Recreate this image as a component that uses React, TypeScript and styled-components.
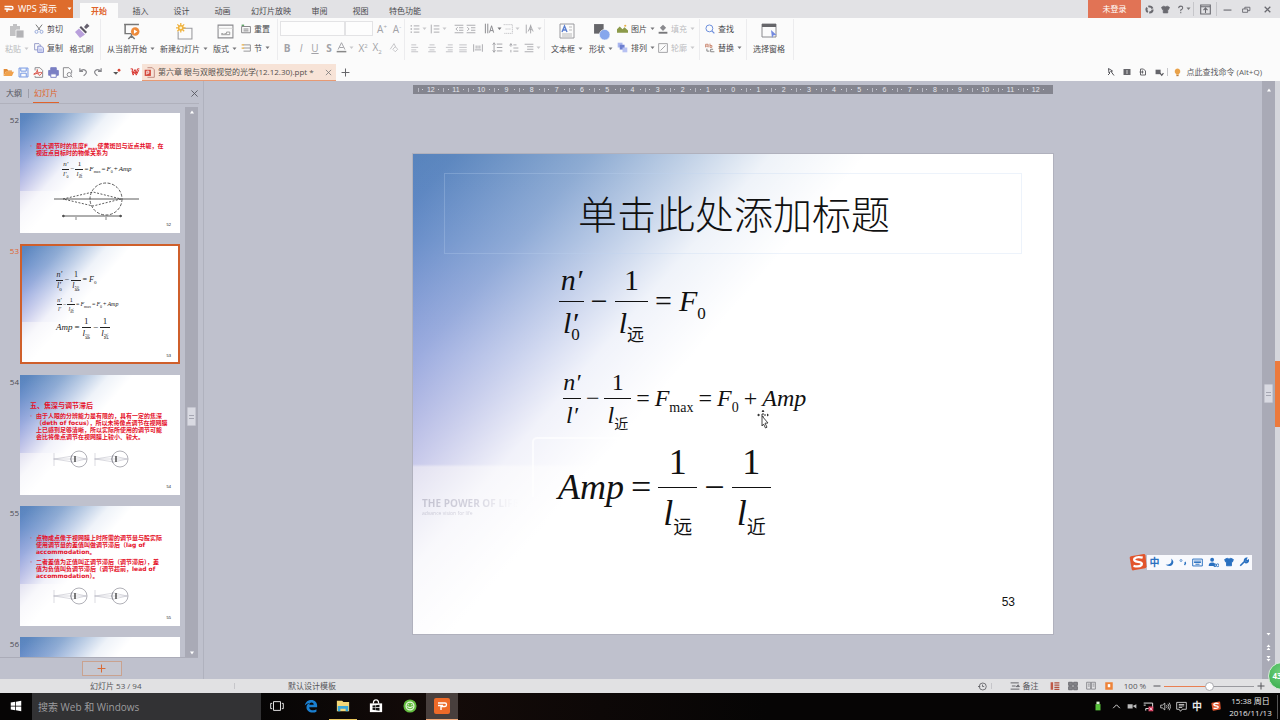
import React from "react";
import styled, { createGlobalStyle, css } from "styled-components";

const ORANGE = "#e0632b";
const UI = `"Open Sans", "Noto Sans CJK SC", sans-serif`;
const SERIF = `"Liberation Serif", "Noto Sans CJK SC", serif`;

const Global = createGlobalStyle`
  *, *::before, *::after { box-sizing: border-box; }
  body { margin: 0; background: #bfc1cd; }
  button { border: 0; padding: 0; background: none; font: inherit; color: inherit; }
`;

const Shell = styled.div`
  position: relative;
  display: flex;
  flex-direction: column;
  height: 100vh;
  overflow: hidden;
  font: 8px/12px ${UI};
  color: #4a4a4e;
`;

/* ---------- icons ---------- */

type IconProps = { w?: number; h?: number; box?: string; children: React.ReactNode };
const Drawing = styled.svg`
  display: block;
  flex: none;
  fill: none;
  stroke: currentColor;
  stroke-width: 1.4;
`;
const Icon = ({ w = 10, h = w, box = "0 0 16 16", children }: IconProps) => (
  <Drawing width={w} height={h} viewBox={box} aria-hidden="true">{children}</Drawing>
);
const Caret = ({ light = false }: { light?: boolean }) => (
  <Icon w={5} h={4} box="0 0 10 8"><path d="M1 1h8l-4 5z" fill={light ? "#c9c9cc" : "#77777b"} stroke="none" /></Icon>
);

/* ---------- title bar ---------- */

const TitleBar = styled.header`
  display: flex;
  align-items: stretch;
  flex: none;
  height: 18px;
  background: #e2e2e5;
`;
const Brand = styled.button`
  display: flex;
  align-items: center;
  gap: 4px;
  width: 73px;
  padding-left: 4px;
  margin-right: 7px;
  background: #de6c2c;
  color: #fff;
  font-size: 9px;
  white-space: nowrap;
  svg:last-child { margin-left: 6px; }
`;
const Tabs = styled.nav`
  display: flex;
  align-items: flex-end;
  flex: 1;
`;
const Tab = styled.button<{ $on?: boolean }>`
  height: 15px;
  min-width: ${p => (p.$on ? 38 : 41)}px;
  padding: 0 8px;
  white-space: nowrap;
  ${p => p.$on && css`background: #fbfbfb; color: ${ORANGE}; font-weight: 700; margin-right: 2px;`}
`;
const WindowTools = styled.div`
  display: flex;
  align-items: center;
  color: #6a6a70;
`;
const Login = styled.button`
  width: 53px;
  height: 18px;
  background: #e17355;
  color: #fff;
`;
const Tool = styled.button<{ $w: number }>`
  display: flex;
  align-items: center;
  justify-content: center;
  gap: 1px;
  width: ${p => p.$w}px;
  height: 16px;
`;
const Rule = styled.i<{ $h?: number }>`
  flex: none;
  width: 1px;
  height: ${p => p.$h ?? 12}px;
  background: #c6c6ca;
`;

/* ---------- ribbon ---------- */

const Ribbon = styled.section`
  display: flex;
  flex: none;
  height: 45px;
  padding-top: 1px;
  background: #fbfbfb;
  overflow: hidden;
`;
const Group = styled.div<{ $l?: number; $r?: number }>`
  display: flex;
  flex: none;
  height: 41px;
  padding: 0 ${p => p.$r ?? 2}px 0 ${p => p.$l ?? 2}px;
  border-right: 1px solid #ececee;
`;
const Big = styled.button<{ $w: number; $off?: boolean }>`
  display: grid;
  grid-template-rows: 22px 14px;
  justify-items: center;
  align-items: center;
  align-content: start;
  padding-top: 1px;
  width: ${p => p.$w}px;
  color: ${p => (p.$off ? "#b9b9bc" : "#4a4a4e")};
`;
const Label = styled.span`
  display: flex;
  align-items: center;
  gap: 3px;
  white-space: nowrap;
`;
const Stack = styled.div<{ $w: number }>`
  display: flex;
  flex-direction: column;
  width: ${p => p.$w}px;
`;
const Small = styled.button<{ $off?: boolean }>`
  display: flex;
  align-items: center;
  gap: 3px;
  height: 19px;
  white-space: nowrap;
  color: ${p => (p.$off ? "#bcbcc0" : "#4a4a4e")};
`;
const Row = styled.div`
  display: flex;
  align-items: center;
  height: 19px;
  color: #a2a2a7;
`;
const Mini = styled.button<{ $w: number; $center?: boolean }>`
  display: flex;
  flex: none;
  align-items: center;
  justify-content: ${p => (p.$center ? "center" : "flex-start")};
  gap: 2px;
  width: ${p => p.$w}px;
  height: 16px;
`;
const Glyph = styled.span`
  font: 10px/14px ${UI};
  b { font-weight: 700; }
  sup, sub { font-size: 6px; line-height: 1; }
`;
const Picker = styled.select<{ $w: number }>`
  width: ${p => p.$w}px;
  height: 15px;
  border: 1px solid #e3e3e5;
  background: #fdfdfd;
  appearance: none;
  font-size: 8px;
`;

/* ---------- quick access row ---------- */

const Quick = styled.div`
  display: flex;
  align-items: center;
  flex: none;
  height: 18px;
  padding-left: 1px;
  background: #fbfbfb;
  color: #88888d;
`;
const DocTab = styled.div`
  display: flex;
  align-items: center;
  height: 17px;
  width: 194px;
  align-self: flex-end;
  padding: 0 4px 0 2px;
  gap: 3px;
  background: #f7e3d7;
  border-bottom: 1px solid #e79a74;
  color: #55504e;
  white-space: nowrap;
  button { margin-left: auto; }
`;
const QuickRight = styled.div`
  display: flex;
  align-items: center;
  margin-left: auto;
  padding-right: 18px;
  white-space: nowrap;
`;
const Hint = styled.button`
  display: flex;
  align-items: center;
  gap: 4px;
  padding-left: 5px;
  color: #5c5c60;
`;

/* ---------- workspace ---------- */

const Workspace = styled.main`
  display: flex;
  flex: 1;
  min-height: 0;
`;
const Side = styled.aside`
  display: flex;
  flex-direction: column;
  flex: none;
  width: 204px;
  border-right: 1px solid #b0b2be;
`;
const SideHead = styled.div`
  display: flex;
  align-items: stretch;
  flex: none;
  height: 23px;
  margin-right: 4px;
  padding: 3px 0 0 5px;
  border-bottom: 1px solid #b0b1bc;
  > :last-child { margin-left: auto; width: 9px; }
`;
const SideTab = styled.button<{ $on?: boolean }>`
  padding: 0 1px;
  color: ${p => (p.$on ? ORANGE : "#55565e")};
  border-bottom: 1px solid ${p => (p.$on ? ORANGE : "transparent")};
`;
const HeadRule = styled.i`
  width: 1px;
  height: 9px;
  margin: 5px 4px 0 5px;
  background: #9d9eaa;
`;
const SideBody = styled.div`
  display: flex;
  flex: 1;
  min-height: 0;
  margin-right: 5px;
  border-bottom: 1px solid #abacb8;
`;
const ThumbList = styled.ol`
  display: flex;
  flex-direction: column;
  gap: 11px;
  flex: 1;
  margin: 0;
  padding: 9px 0 0;
  overflow: hidden;
  list-style: none;
`;
const ThumbItem = styled.li<{ $on?: boolean }>`
  display: flex;
  flex: none;
  color: ${p => (p.$on ? ORANGE : "#4c4d55")};
`;
const ThumbNo = styled.span`
  width: 20px;
  padding: 1px 1px 0 0;
  text-align: right;
`;
const Track = styled.div<{ $top: number }>`
  display: flex;
  flex-direction: column;
  align-items: center;
  flex: none;
  width: 13px;
  margin-top: ${p => p.$top}px;
  padding: 3px 0 2px;
  background: #a9aab6;
`;
const Knob = styled.i`
  flex: none;
  width: 9px;
  height: 19px;
  background: #d9dae2;
  border: 1px solid #c4c5cf;
  border-radius: 1px;
  display: flex;
  flex-direction: column;
  justify-content: center;
  gap: 2px;
  padding: 0 1px;
  &::before, &::after { content: ""; height: 1px; background: #a5a6b2; }
`;
const Space = styled.i<{ $n: number }>`
  flex: ${p => p.$n} 1 0;
`;
const AddBar = styled.div`
  display: flex;
  justify-content: center;
  align-items: center;
  flex: none;
  height: 21px;
`;
const AddButton = styled.button`
  display: flex;
  align-items: center;
  justify-content: center;
  width: 40px;
  height: 15px;
  border: 1px solid #c9a28f;
  background: #c6c7d0;
  color: #d96a35;
`;

/* ---------- slides ---------- */

const slidePaint = css`
  background:
    linear-gradient(131deg, rgba(255,255,255,0) 0%, rgba(255,255,255,.03) 4%, rgba(255,255,255,.32) 17%,
      rgba(255,255,255,.62) 26%, rgba(255,255,255,.9) 34%, #fff 43%),
    linear-gradient(#5884bd 0%, #5a83c4 18%, #6d84d0 42%, #7478cb 64.6%, #b5b2da 65.2%, #c8c6e4 100%);
`;
const Thumb = styled.div<{ $on?: boolean }>`
  display: flex;
  flex-direction: column;
  flex: none;
  width: 160px;
  height: 120px;
  overflow: hidden;
  ${slidePaint}
  outline: ${p => (p.$on ? "2px solid #cf5f2b" : "0")};
  outline-offset: -2px;
  color: #222;
`;
const redType = css`
  margin: 0 0 1px;
  padding-left: 10px;
  font-family: "DejaVu Sans", "Noto Sans CJK SC", sans-serif;
  font-weight: 700;
  color: #e5122b;
  white-space: nowrap;
`;
const RedTitle = styled.h2`
  ${redType}
  font-size: 7px;
  line-height: 9px;
`;
const RedText = styled.p`
  ${redType}
  display: grid;
  grid-template-columns: 6px 1fr;
  font-size: 6px;
  line-height: 7px;
  &::before { content: "·"; color: #c46a86; }
  span { grid-column: 2; }
  sub { font-size: 4px; line-height: 0; }
`;
const Pad = styled.div<{ $h: number }>`
  flex: none;
  height: ${p => p.$h}px;
`;
const PageNo = styled.span<{ $big?: boolean }>`
  margin-top: auto;
  align-self: flex-end;
  padding: ${p => (p.$big ? "0 38px 24px 0" : "0 9px 5px 0")};
  font: ${p => (p.$big ? "12px/16px" : "4px/6px")} "Liberation Sans", sans-serif;
  color: #111;
`;

const Canvas = styled.section`
  display: flex;
  flex-direction: column;
  align-items: center;
  flex: 1;
  min-width: 0;
  padding-top: 4px;
  overflow: hidden;
`;
const Ruler = styled.div`
  display: flex;
  flex: none;
  width: 640px;
  height: 9px;
  padding: 0 5px;
  background: #84858f;
  color: #e6e7ee;
  font: 7px/9px "Liberation Sans", sans-serif;
`;
const RulerCell = styled.span`
  display: flex;
  flex: 1 1 0;
  align-items: center;
  justify-content: space-between;
  &::before { content: ""; width: 1px; height: 4px; background: #b9bac4; }
  &::after { content: ""; width: 1px; height: 1px; margin-right: 4px; background: #d0d1da; }
  b { font-weight: 400; width: 8px; text-align: center; }
`;
const RulerDot = styled.i`
  width: 1px;
  height: 1px;
  background: #d0d1da;
`;
const Slide = styled.article`
  position: relative;
  display: flex;
  flex-direction: column;
  flex: none;
  width: 640px;
  height: 480px;
  margin-top: 60px;
  padding-top: 19px;
  overflow: hidden;
  ${slidePaint}
  box-shadow: 0 0 0 1px rgba(150,150,160,.35);
  color: #111;
`;
const TitleHolder = styled.h1`
  flex: none;
  height: 81px;
  margin: 0 31px;
  padding-left: 2px;
  border: 1px solid rgba(190,212,240,.28);
  font: 300 39px/76px "Noto Sans CJK SC", sans-serif;
  text-align: center;
`;
const Watermark = styled.div`
  position: absolute;
  left: 9px;
  top: 342px;
  font: 700 10px/14px "Open Sans", sans-serif;
  background: linear-gradient(90deg, #c3c2d0, #d4d3de 55%, rgba(240,240,244,.1) 95%);
  background-clip: text;
  color: transparent;
  small { display: block; font-size: 5px; line-height: 6px; font-weight: 400; }
`;
const Glow = styled.i`
  position: absolute;
  left: 119px;
  top: 283px;
  width: 120px;
  height: 60px;
  border: solid rgba(255,255,255,.65);
  border-width: 2px 0 0 2px;
  border-radius: 5px 0 0 0;
`;
const Pointer = styled.div`
  position: absolute;
  left: 343px;
  top: 255px;
  color: #333;
`;

/* ---------- formulas ---------- */

type Scale = { size: number; sub: number; gap: number; pad: number; h: number; x: number };
const Formula = styled.div<{ $s: Scale }>`
  display: flex;
  flex: none;
  align-items: center;
  gap: ${p => p.$s.gap}px;
  height: ${p => p.$s.h}px;
  padding-left: ${p => p.$s.x}px;
  font: ${p => p.$s.size}px/${p => p.$s.size}px ${SERIF};
  white-space: nowrap;
  sub {
    font-size: ${p => p.$s.sub}px;
    line-height: 0;
    font-style: normal;
    vertical-align: -${p => Math.round(p.$s.size / 4)}px;
  }
`;
const Frac = styled.span<{ $s: Scale }>`
  display: grid;
  grid-template-rows: 1fr 1px 1fr;
  align-self: stretch;
  justify-items: center;
  &::before {
    content: "";
    grid-row: 2;
    width: 100%;
    background: currentColor;
  }
  > :first-child { grid-row: 1; align-self: end; padding-bottom: ${p => p.$s.pad}px; }
  > :last-child { grid-row: 3; align-self: start; padding: ${p => p.$s.pad}px ${p => Math.round(p.$s.size / 8)}px 0; }
`;
const Var = styled.i`
  font-style: italic;
`;
/* prime and index set one above the other */
const Scripts = styled.span<{ $s: Scale }>`
  display: inline-grid;
  height: ${p => p.$s.size}px;
  vertical-align: top;
  > * { grid-area: 1 / 1; }
  > :last-child {
    font-style: normal;
    font-size: ${p => p.$s.sub}px;
    padding-top: ${p => Math.round(p.$s.size / 2) - 3 * Math.round(p.$s.size / 30)}px;
  }
`;

const FormulaFar = ({ s }: { s: Scale }) => (
  <Formula $s={s}>
    <Frac $s={s}>
      <Var>n′</Var>
      <Var>l<Scripts $s={s}><span>′</span><span>0</span></Scripts></Var>
    </Frac>
    <span>−</span>
    <Frac $s={s}><span>1</span><Var>l<sub>远</sub></Var></Frac>
    <span>=</span>
    <Var>F<sub>0</sub></Var>
  </Formula>
);
const FormulaMax = ({ s, zero = false }: { s: Scale; zero?: boolean }) => (
  <Formula $s={s}>
    <Frac $s={s}>
      <Var>n′</Var>
      <Var>l′{zero && <sub>0</sub>}</Var>
    </Frac>
    <span>−</span>
    <Frac $s={s}><span>1</span><Var>l<sub>近</sub></Var></Frac>
    <span>=</span>
    <Var>F<sub>max</sub></Var>
    <span>=</span>
    <Var>F<sub>0</sub></Var>
    <span>+</span>
    <Var>Amp</Var>
  </Formula>
);
const FormulaAmp = ({ s }: { s: Scale }) => (
  <Formula $s={s}>
    <Var>Amp</Var>
    <span>=</span>
    <Frac $s={s}><span>1</span><Var>l<sub>远</sub></Var></Frac>
    <span>−</span>
    <Frac $s={s}><span>1</span><Var>l<sub>近</sub></Var></Frac>
  </Formula>
);

const EyePair = () => (
  <Icon w={160} h={24} box="0 0 160 24">
    {[34, 75].map(x => (
      <g key={x} stroke="#8e8e98" strokeWidth=".7">
        <path d={`M${x} 6v13M${x - 1} 12h34M${x} 12l19-3 13 3-13 3z`} stroke="#b5b5c0" strokeWidth=".5" />
        <circle cx={x + 25} cy="12" r="8" />
        <path d={`M${x + 18} 8q-3 4 0 8`} />
        <path d={`M${x + 21} 9v6`} stroke="#444" strokeWidth="1.4" />
      </g>
    ))}
  </Icon>
);

/* ---------- floating input bar ---------- */

const Ime = styled.div`
  position: absolute;
  right: 28px;
  bottom: 149px;
  display: flex;
  align-items: center;
`;
const ImeKeys = styled.div`
  display: flex;
  align-items: center;
  justify-content: space-around;
  width: 105px;
  height: 15px;
  background: #f8f9fd;
  color: #2a70c0;
  font-size: 10px;
  font-weight: 700;
`;
const SogouMark = ({ w }: { w: number }) => (
  <Icon w={w} box="0 0 20 20">
    <path d="M2 3.5 16.500 1Q18 1 18.300 2.500L19.500 15Q19.500 16.500 18 17L5 19.300Q3.500 19.500 3 18L.8 5.500Q.6 4 2 3.500z" fill="#e2552c" stroke="none" />
    <path d="M15.200 5.200Q9 3.500 6 6.200Q4.500 9 10 9.800Q15.500 10.500 14 13.200Q11.500 16 5 14.300" stroke="#fff" strokeWidth="2.600" />
  </Icon>
);
const Edge = styled.i`
  flex: none;
  width: 5px;
  background: linear-gradient(#d5d6dc 0 280px, #ec7a3c 280px 346px, #d5d6dc 346px);
`;
const Ball = styled.button`
  position: absolute;
  right: -16px;
  bottom: 30px;
  width: 28px;
  height: 28px;
  padding-right: 10px;
  border: 1px solid #d5ecd6;
  border-radius: 50%;
  background: radial-gradient(circle at 45% 35%, #6fd07a, #2fa646);
  color: #fff;
  font-weight: 700;
`;

/* ---------- status bar and taskbar ---------- */

const Status = styled.footer`
  display: flex;
  align-items: center;
  flex: none;
  height: 14px;
  background: #e1e1e3;
  white-space: nowrap;
  color: #55555a;
`;
const StatusText = styled.span<{ $l: number; $w: number }>`
  width: ${p => p.$w}px;
  padding-left: ${p => p.$l}px;
`;
const StatusRight = styled.div`
  display: flex;
  align-items: center;
  margin-left: auto;
  padding-right: 14px;
`;
const NotesTool = styled(Tool)`
  gap: 3px;
  margin-left: 10px;
`;
const Zoom = styled.input`
  width: 90px;
  height: 10px;
  margin: 0 2px 0 3px;
  appearance: none;
  background: linear-gradient(90deg, #e98053 50%, #9a9a9f 50%) center / 100% 1px no-repeat;
  &::-webkit-slider-thumb {
    appearance: none;
    width: 9px;
    height: 9px;
    border: 1px solid #a9a9ae;
    border-radius: 50%;
    background: #fff;
  }
`;
const Taskbar = styled.footer`
  display: flex;
  align-items: stretch;
  flex: none;
  height: 27px;
  background: linear-gradient(90deg, #060505 20%, #140b09 34%, #060505 60%);
  color: #e8e8e8;
`;
const TaskItem = styled.button<{ $w: number; $line?: string; $on?: boolean }>`
  display: flex;
  align-items: center;
  justify-content: center;
  width: ${p => p.$w}px;
  border-bottom: 1px solid ${p => p.$line ?? "transparent"};
  background: ${p => (p.$on ? "#483f3d" : "none")};
`;
const Search = styled.input`
  width: 229px;
  padding: 0 6px;
  border: 0;
  background: #323234;
  color: #ddd;
  font: 10px/14px ${UI};
  &::placeholder { color: #9c9c9e; opacity: 1; }
`;
const Tray = styled.div`
  display: flex;
  align-items: center;
  margin-left: auto;
  padding-right: 2px;
`;
const Clock = styled.time`
  width: 51px;
  padding-right: 3px;
  border-right: 1px solid #555;
  text-align: center;
  white-space: nowrap;
`;
const Lang = styled.span`
  font-size: 10px;
  font-weight: 700;
`;

const big = {
  far: { size: 30, sub: 17, gap: 7, pad: 6, h: 94, x: 146 },
  max: { size: 24, sub: 14, gap: 5, pad: 4, h: 80, x: 150 },
  amp: { size: 36, sub: 19, gap: 7, pad: 7, h: 98, x: 145 },
};
const tiny = {
  far: { size: 8, sub: 5, gap: 2, pad: 1, h: 24, x: 36 },
  max: { size: 6, sub: 4, gap: 1, pad: 1, h: 20, x: 37 },
  amp: { size: 9, sub: 5, gap: 2, pad: 1, h: 24, x: 36 },
  top: { size: 7, sub: 4, gap: 1, pad: 1, h: 24, x: 42 },
};
const marks = Array.from({ length: 25 }, (_, i) => Math.abs(i - 12));

export default function App() {
  return (
    <Shell>
      <Global />
      <TitleBar>
        <Brand>
          <Icon w={10} h={8} box="0 0 20 16"><path d="M1 3h14q3 0 3 3t-3 3H6v5M1 8h10" stroke="#fff" strokeWidth="2.6" /></Icon>
          WPS 演示
          <Icon w={5} h={4} box="0 0 10 8"><path d="M1 1h8l-4 5z" fill="#fff" stroke="none" /></Icon>
        </Brand>
        <Tabs>
          <Tab $on>开始</Tab>
          {["插入", "设计", "动画", "幻灯片放映", "审阅", "视图", "特色功能"].map(t => <Tab key={t}>{t}</Tab>)}
        </Tabs>
        <WindowTools>
          <Login>未登录</Login>
          <Tool $w={16} aria-label="同步"><Icon w={9}><circle cx="8" cy="8" r="5.500" strokeWidth="3.600" strokeDasharray="9 2.500" /></Icon></Tool>
          <Tool $w={16} aria-label="皮肤"><Icon w={9}><path d="M5 2 1 4l1.500 4L4 7.500V14h8V7.500l1.500.5L15 4l-4-2q-3 2.500-6 0z" fill="currentColor" /></Icon></Tool>
          <Tool $w={20} aria-label="帮助"><Icon w={9}><path d="M4.500 5.500Q5 2 8.500 2T12 5.500Q12 7 8.500 9v2M8.500 12.500v2" strokeWidth="1.800" /></Icon><Caret /></Tool>
          <Rule $h={14} />
          <Tool $w={22} aria-label="折叠功能区"><Icon w={11}><path d="M1 1.500h14v13H1zM1 4h14M8 13V6.500M5 9l3-3 3 3" strokeWidth="1.600" /></Icon></Tool>
          <Rule $h={14} />
          <Tool $w={20} aria-label="最小化"><Icon w={9}><path d="M1 9h14" strokeWidth="2" /></Icon></Tool>
          <Tool $w={18} aria-label="还原"><Icon w={9}><path d="M1 7h9v6H1zM5 7V4h9v6h-4" strokeWidth="1.600" /></Icon></Tool>
          <Tool $w={25} aria-label="关闭"><Icon w={9}><path d="m3 3 10 10M13 3 3 13" strokeWidth="2.200" /></Icon></Tool>
        </WindowTools>
      </TitleBar>

      <Ribbon>
        <Group $l={0} $r={3}>
          <Big $w={34} $off>
            <Icon w={16}><path d="M1 3h10v10H1zM4 1h4v3H4z" fill="#c2c2c4" stroke="none" /><path d="M7 7h8v8H7z" fill="#b3b3b6" stroke="#fbfbfb" strokeWidth=".8" /></Icon>
            <Label>粘贴 <Caret light /></Label>
          </Big>
          <Stack $w={32}>
            <Small><Icon><path d="m3 1 7 9M13 1 6 10" stroke="#666" /><circle cx="4" cy="12.500" r="2.400" stroke="#8ea2d8" /><circle cx="12" cy="12.500" r="2.400" stroke="#8ea2d8" /></Icon>剪切</Small>
            <Small><Icon><path d="M1 1h7l2 2v8H1z" stroke="#8d93c4" /><path d="M6 5h6l3 3v7H6z" fill="#e6e9fa" stroke="#7f88cc" /><path d="M8 10h5M8 12.500h5" stroke="#7f88cc" strokeWidth=".8" /></Icon>复制</Small>
          </Stack>
          <Big $w={31}>
            <Icon w={16}><path d="m10 4 3-3.500 2.500 2.500L12 6z" fill="#66606e" stroke="none" /><path d="m7 3 6 6-1.500 1.500-6-6z" fill="#5a5562" stroke="none" /><path d="m5 5.500 6 6-5 3.500L1 9z" fill="#b9a0dc" stroke="none" /></Icon>
            <Label>格式刷</Label>
          </Big>
        </Group>
        <Group $r={0}>
          <Big $w={56}>
            <Icon w={17}><path d="M1 1.500h14M2 2v8h6M8 10v4M5 15l3-3 3 3" stroke="#777" /><circle cx="11.500" cy="8" r="4" fill="#ee8a3a" stroke="none" /><path d="m10.300 6 3.200 2-3.200 2z" fill="#fff" stroke="none" /></Icon>
            <Label>从当前开始 <Caret /></Label>
          </Big>
          <Big $w={50}>
            <Icon w={17}><path d="M4 5h11v10H2V8" stroke="#9a9a9e" strokeWidth="1" /><path d="M4.500 0v9M0 4.500h9M1.300 1.300l6.400 6.400M7.700 1.300 1.300 7.700" stroke="#f0b23c" strokeWidth="1.200" /><circle cx="4.500" cy="4.500" r="2" fill="#fff3c9" stroke="#f0b23c" /></Icon>
            <Label>新建幻灯片 <Caret /></Label>
          </Big>
          <Big $w={32}>
            <Icon w={17}><path d="M1 2h14v12H1z" strokeWidth="1" stroke="#8a8a8e" /><path d="M1 5h14" stroke="#ccc" strokeWidth=".8" /><path d="M4 10h2M7 10h2v-1.500h3V11H4" strokeWidth=".9" stroke="#999" /></Icon>
            <Label>版式 <Caret /></Label>
          </Big>
          <Stack $w={36}>
            <Small><Icon><path d="M1 4h14v10H1zM4 8h8M4 11h8" stroke="#77777a" /><path d="M1 2h4" stroke="#4d9a56" strokeWidth="2" /></Icon>重置</Small>
            <Small><Icon><path d="M4 3h11M4 13h11M4 8h11v5M15 3v5" stroke="#8a8a8e" /><path d="M1 3h4M1 8h4" stroke="#e9b04a" strokeWidth="2" /></Icon>节 <Caret /></Small>
          </Stack>
        </Group>
        <Group $r={0}>
          <Stack $w={124}>
            <Row>
              <Picker $w={65} aria-label="字体"><option></option></Picker>
              <Picker $w={28} aria-label="字号"><option></option></Picker>
              <Mini $w={18} $center aria-label="增大字号"><Glyph>A<sup>+</sup></Glyph></Mini>
              <Mini $w={12} $center aria-label="减小字号"><Glyph>A<sup>-</sup></Glyph></Mini>
            </Row>
            <Row>
              <Mini $w={14} $center aria-label="加粗"><Glyph><b>B</b></Glyph></Mini>
              <Mini $w={14} $center aria-label="倾斜"><Glyph><i>I</i></Glyph></Mini>
              <Mini $w={14} $center aria-label="下划线"><Glyph><u>U</u></Glyph></Mini>
              <Mini $w={14} $center aria-label="阴影"><Glyph><b>S</b></Glyph></Mini>
              <Mini $w={20} aria-label="字体颜色"><Icon w={11}><path d="m3 11 5-10 5 10M5 8h6" /><path d="M1 14h14" stroke="#888" strokeWidth="2.200" /></Icon><Caret light /></Mini>
              <Mini $w={14} $center aria-label="上标"><Glyph>X<sup>2</sup></Glyph></Mini>
              <Mini $w={14} $center aria-label="下标"><Glyph>X<sub>2</sub></Glyph></Mini>
              <Mini $w={20} $center aria-label="清除格式"><Icon><path d="m2 10 6-9 3 6M6 10l4-4 4 4-4 4z" stroke="#c0c0c4" /></Icon></Mini>
            </Row>
          </Stack>
        </Group>
        <Group $l={5} $r={0}>
          <Stack $w={134}>
            <Row>
              <Mini $w={20} aria-label="项目符号"><Icon><path d="M6 3h9M6 8h9M6 13h9" /><path d="M1 3h2M1 8h2M1 13h2" strokeWidth="2.200" /></Icon><Caret light /></Mini>
              <Mini $w={24} aria-label="编号"><Icon><path d="M6 3h9M6 8h9M6 13h9M2 1v14" /></Icon><Caret light /></Mini>
              <Mini $w={12} aria-label="减少缩进"><Icon><path d="M1 2h14M8 6h7M8 10h7M1 14h14M6 5 3 8l3 3" /></Icon></Mini>
              <Mini $w={18} aria-label="增加缩进"><Icon><path d="M1 2h14M8 6h7M8 10h7M1 14h14M2 5l3 3-3 3" /></Icon></Mini>
              <Mini $w={19} aria-label="文字方向"><Icon w={11}><path d="M2 1v14M5.500 1v14M8 14l3-10 3 10M9 11h4" stroke="#88888d" /></Icon><Caret /></Mini>
              <Mini $w={22} aria-label="对齐文本"><Icon><path d="M1 1h14v14H1M4 8h8" stroke="#c0c0c4" strokeDasharray="2 1" /></Icon><Caret light /></Mini>
              <Mini $w={18} aria-label="转换图形"><Icon><path d="M2 1v14M5 12l4-9 4 9M9 1v14M7 9h4" /></Icon><Caret light /></Mini>
            </Row>
            <Row>
              <Mini $w={17} aria-label="左对齐"><Icon><path d="M2 3h8M2 7h11M2 11h8M2 14h11" stroke="#bdbdc1" /></Icon></Mini>
              <Mini $w={17} aria-label="居中"><Icon><path d="M4 3h8M2 7h12M4 11h8M2 14h12" stroke="#bdbdc1" /></Icon></Mini>
              <Mini $w={14} aria-label="右对齐"><Icon><path d="M6 3h8M3 7h11M6 11h8M3 14h11" stroke="#bdbdc1" /></Icon></Mini>
              <Mini $w={15} aria-label="两端对齐"><Icon><path d="M2 3h12M2 7h12M2 11h12M2 14h12" stroke="#bdbdc1" /></Icon></Mini>
              <Mini $w={19} aria-label="分散对齐"><Icon><path d="M1 2v12M15 2v12M3 11h10M5 4v5M8 4v5M11 4v5" /></Icon></Mini>
              <Mini $w={17} aria-label="行距"><Icon w={11}><path d="M7 3h8M7 8h8M7 13h8M3 2v12M1 4l2-3 2 3M1 12l2 3 2-3" /></Icon></Mini>
              <Mini $w={15} aria-label="段距"><Icon w={10}><path d="M7 3h5M7 8h8M7 13h8M3 1v5M1 4l2-3 2 3M3 15v-4" /></Icon></Mini>
              <Mini $w={18} aria-label="制表位"><Icon><path d="M1 2h14M5 6h10M5 10h10M1 14h14" /></Icon><Caret light /></Mini>
            </Row>
          </Stack>
        </Group>
        <Group $l={4} $r={1}>
          <Big $w={36}>
            <Icon w={16}><path d="M1 1h14v14H1z" stroke="#9a9a9e" strokeWidth="1" /><path d="m3 9 2.500-6L8 9M4 7h3" stroke="#5b7fd0" /><path d="M10 4h3M10 7h3M3 11h10M3 13h10" stroke="#aaa" strokeWidth=".8" /></Icon>
            <Label>文本框 <Caret /></Label>
          </Big>
          <Big $w={32}>
            <Icon w={17}><path d="M1 1h9v9H1z" fill="#66666a" stroke="none" /><circle cx="11" cy="11" r="5" fill="#86a7ec" stroke="#fbfbfb" strokeWidth=".6" /></Icon>
            <Label>形状 <Caret /></Label>
          </Big>
          <Stack $w={41}>
            <Small><Icon w={11}><path d="M0 14V9l4-4 4 4 3-3 5 5v3z" fill="#8c9a4a" stroke="none" /><circle cx="12" cy="4" r="1.600" fill="#e9b04a" stroke="none" /></Icon>图片 <Caret /></Small>
            <Small><Icon w={11}><path d="M1 1h7v7H1z" fill="#a9b6ee" stroke="none" /><path d="M4 4h7v7H4z" fill="#6d7fd0" stroke="none" /><path d="M8 8h7v7H8z" fill="#b7c1f2" stroke="none" /></Icon>排列 <Caret /></Small>
          </Stack>
          <Stack $w={40}>
            <Small $off><Icon><path d="m8 1 5 5-5 5-5-5z" fill="#8a8a8e" stroke="none" /><path d="M1 14h14" stroke="#77777a" strokeWidth="3" /></Icon>填充 <Caret light /></Small>
            <Small $off><Icon><path d="M1 1h14v14H1zM4 12l8-8" stroke="#99999d" /></Icon>轮廓 <Caret light /></Small>
          </Stack>
        </Group>
        <Group $l={5} $r={0}>
          <Stack $w={41}>
            <Small><Icon><circle cx="7" cy="7" r="5.500" stroke="#6d8fdc" strokeWidth="1.600" /><path d="m11 11 4 4" stroke="#6d8fdc" strokeWidth="2" /></Icon>查找</Small>
            <Small><Icon><path d="M1 7V2h4v5M1 5h4M8 1v6h3V4H8" stroke="#c77f66" /><path d="M3 9v4h4M9 10h4M9 14h6M9 10v4" stroke="#777" /></Icon>替换 <Caret /></Small>
          </Stack>
        </Group>
        <Group $l={0}>
          <Big $w={44}>
            <Icon w={16}><path d="M1 1h14v13H1z" stroke="#8a8a8e" strokeWidth="1" /><path d="M1 2.500h14" stroke="#66666a" strokeWidth="3" /><path d="m10 7 5.500 5-3 .3L11 15z" fill="#7289e0" stroke="none" /></Icon>
            <Label>选择窗格</Label>
          </Big>
        </Group>
      </Ribbon>

      <Quick>
        <Tool $w={15} aria-label="打开"><Icon w={11}><path d="M1 13V3h5l1.500 2H13v2H4z" fill="#e28a35" stroke="none" /><path d="M4 7h12l-3 6H1z" fill="#f0a24d" stroke="none" /></Icon></Tool>
        <Tool $w={15} aria-label="保存"><Icon w={11}><path d="M1.500 1.500h13v13h-13zM4 2v4h8V2M4 14V9h8v5" stroke="#6e93e2" /></Icon></Tool>
        <Tool $w={15} aria-label="输出为PDF"><Icon w={11}><path d="M3 5V1h7l4 4v10H3v-2" /><path d="M1 10q5-1 5-5t1 3 5 2-11 1" stroke="#d9534a" /></Icon></Tool>
        <Tool $w={14} aria-label="打印"><Icon w={11}><path d="M4 5V1h8v4M1 5h14v7H1z" fill="#7a7fc4" stroke="#7a7fc4" /><path d="M4 10h8v5H4z" fill="#fff" stroke="#7a7fc4" /></Icon></Tool>
        <Tool $w={15} aria-label="打印预览"><Icon w={11}><path d="M8 15H2V1h8l4 4v4" /><circle cx="10.500" cy="11" r="3" /><path d="m13 13 2 2" /></Icon></Tool>
        <Tool $w={15} aria-label="撤销"><Icon w={10}><path d="M3 7q5-5 9-1.500T9 14M3 2v5h5" strokeWidth="2" /></Icon></Tool>
        <Tool $w={15} aria-label="恢复"><Icon w={10}><path d="M13 7Q8 2 4 5.500T7 14M13 2v5H8" strokeWidth="2" /></Icon></Tool>
        <Tool $w={22} aria-label="自定义快速访问"><Icon w={9}><path d="M2 7h9l-4 5z" fill="#555" stroke="none" /><circle cx="12.500" cy="4" r="2.500" fill="#d94a3a" stroke="none" /></Icon></Tool>
        <Tool $w={15} aria-label="WPS 首页"><Icon w={10}><path d="M1 3h3l1 7 3-6 2 6 2-7h3M3 6l2 7 3-5 2 5 4-8" stroke="#d8342e" strokeWidth="1.600" /></Icon></Tool>
        <DocTab>
          <Icon w={11}><path d="M5 1h7l3 3v11H5" stroke="#c08a80" /><path d="M1 4h9v9H1z" fill="#d2493c" stroke="none" /><path d="M4 11V6h3v3H4" stroke="#fff" strokeWidth="1.200" /></Icon>
          <span>第六章 眼与双眼视觉的光学(12.12.30).ppt *</span>
          <button aria-label="关闭文档"><Icon w={7}><path d="m2 2 12 12M14 2 2 14" strokeWidth="1.800" stroke="#777" /></Icon></button>
        </DocTab>
        <Tool $w={18} aria-label="新建文档"><Icon w={9}><path d="M8 1v14M1 8h14" strokeWidth="1.800" stroke="#66666a" /></Icon></Tool>
        <QuickRight>
          <Tool $w={16} aria-label="指针"><Icon w={8}><path d="m3 1 8 5-3 1 6 8M3 1l1 9 3-3M2 14l4-4" strokeWidth="2" stroke="#55555a" /></Icon></Tool>
          <Tool $w={16} aria-label="窗口"><Icon w={8}><path d="M1 2h14v12H1z" fill="#66666b" stroke="none" /><path d="M8 4v8" stroke="#ddd" strokeWidth="1.800" /></Icon></Tool>
          <Tool $w={16} aria-label="文档"><Icon w={8}><path d="M3 2h6l4 4v8H3zM1 8h8M7 5v6" stroke="#66666b" strokeWidth="2" /></Icon></Tool>
          <Tool $w={16} aria-label="更多"><Icon w={9}><path d="M1 3h9v8H1z" fill="#66666b" stroke="none" /><path d="m9 9 3 4 3-4" stroke="#55555a" strokeWidth="2" /></Icon></Tool>
          <Rule $h={8} />
          <Hint>
            <Icon w={9}><path d="M8 1a5 5 0 0 1 3 9l-1 2H6l-1-2a5 5 0 0 1 3-9z" fill="#e9a24a" stroke="none" /><path d="M6 13.500h4" stroke="#b87a3a" strokeWidth="2" /></Icon>
            点此查找命令 (Alt+Q)
          </Hint>
        </QuickRight>
      </Quick>

      <Workspace>
        <Side>
          <SideHead>
            <SideTab>大纲</SideTab>
            <HeadRule />
            <SideTab $on>幻灯片</SideTab>
            <SideTab aria-label="关闭窗格"><Icon w={7}><path d="m1 1 14 14M15 1 1 15" strokeWidth="2" /></Icon></SideTab>
          </SideHead>
          <SideBody>
            <ThumbList>
              <ThumbItem>
                <ThumbNo>52</ThumbNo>
                <Thumb>
                  <Pad $h={29} />
                  <RedText>
                    <span>最大调节时的焦度F<sub>max</sub>使黄斑凹与近点共轭，在</span>
                    <span>视近点目标时的物像关系为</span>
                  </RedText>
                  <FormulaMax s={tiny.top} zero />
                  <Icon w={160} h={40} box="0 0 160 40">
                    <g stroke="#333" strokeWidth=".8">
                      <path d="M34 18h85" />
                      <path d="m43 18 30-7 28 7-28 7z" strokeDasharray="2 1.500" />
                      <circle cx="86" cy="18" r="16" strokeDasharray="3 1.500" />
                      <path d="M43 35h58M42 35l2-1v2zM102 35l-2-1v2z" />
                      <path d="M56 36v3M86 36v3" strokeWidth=".6" />
                    </g>
                  </Icon>
                  <PageNo>52</PageNo>
                </Thumb>
              </ThumbItem>
              <ThumbItem $on>
                <ThumbNo>53</ThumbNo>
                <Thumb $on>
                  <Pad $h={24} />
                  <FormulaFar s={tiny.far} />
                  <Pad $h={2} />
                  <FormulaMax s={tiny.max} />
                  <Pad $h={1} />
                  <FormulaAmp s={tiny.amp} />
                  <PageNo>53</PageNo>
                </Thumb>
              </ThumbItem>
              <ThumbItem>
                <ThumbNo>54</ThumbNo>
                <Thumb>
                  <Pad $h={27} />
                  <RedTitle>五、焦深与调节滞后</RedTitle>
                  <RedText>
                    <span>由于人眼的分辨能力是有限的，具有一定的焦深</span>
                    <span>（deth of focus），所以未将像点调节在视网膜</span>
                    <span>上已感到足够清晰，所以实际所使用的调节可能</span>
                    <span>会比将像点调节在视网膜上较小、较大。</span>
                  </RedText>
                  <Pad $h={6} />
                  <EyePair />
                  <PageNo>54</PageNo>
                </Thumb>
              </ThumbItem>
              <ThumbItem>
                <ThumbNo>55</ThumbNo>
                <Thumb>
                  <Pad $h={28} />
                  <RedText>
                    <span>点物成点像于视网膜上时所需的调节量与股实际</span>
                    <span>使用调节量的差值叫做调节滞后（lag of</span>
                    <span>accommodation。</span>
                  </RedText>
                  <Pad $h={2} />
                  <RedText>
                    <span>二者差值为正值叫正调节滞后（调节滞后），差</span>
                    <span>值为负值叫负调节滞后（调节超前，lead of</span>
                    <span>accommodation）。</span>
                  </RedText>
                  <Pad $h={4} />
                  <EyePair />
                  <PageNo>55</PageNo>
                </Thumb>
              </ThumbItem>
              <ThumbItem>
                <ThumbNo>56</ThumbNo>
                <Thumb />
              </ThumbItem>
            </ThumbList>
            <Track $top={3}>
              <Icon w={6} h={4} box="0 0 10 8"><path d="M1 7h8L5 1z" fill="#fff" stroke="none" /></Icon>
              <Space $n={292} />
              <Knob />
              <Space $n={224} />
              <Icon w={6} h={4} box="0 0 10 8"><path d="M1 1h8L5 7z" fill="#fff" stroke="none" /></Icon>
            </Track>
          </SideBody>
          <AddBar>
            <AddButton aria-label="新建幻灯片"><Icon w={9}><path d="M8 1v14M1 8h14" strokeWidth="1.800" /></Icon></AddButton>
          </AddBar>
        </Side>

        <Canvas>
          <Ruler>
            {marks.map((n, i) => (
              <RulerCell key={i}><RulerDot /><b>{n}</b></RulerCell>
            ))}
          </Ruler>
          <Slide>
            <Glow />
            <Watermark>THE POWER OF LIFE<small>advance vision for life</small></Watermark>
            <TitleHolder>单击此处添加标题</TitleHolder>
            <FormulaFar s={big.far} />
            <Pad $h={10} />
            <FormulaMax s={big.max} />
            <FormulaAmp s={big.amp} />
            <PageNo $big>53</PageNo>
            <Pointer>
              <Icon w={14} h={20} box="0 0 14 20">
                <path d="M7 1v10M2 6h10" strokeWidth="1" strokeDasharray="2 1" />
                <path d="M7 1 5.500 3h3zM1 6l2-1.500v3zM13 6l-2-1.500v3z" fill="#333" stroke="none" />
                <path d="m6 7 6 7-3 .2 2 4-1.500.8-2-4L6 17z" fill="#fff" strokeWidth=".9" />
              </Icon>
            </Pointer>
          </Slide>
        </Canvas>
        <Track $top={0}>
          <Pad $h={4} />
          <Icon w={6} h={4} box="0 0 10 8"><path d="M1 7h8L5 1z" fill="#fff" stroke="none" /></Icon>
          <Space $n={292} />
          <Knob />
          <Space $n={229} />
          <Icon w={7} h={36} box="0 0 14 72">
            <path d="M3 2h8l-4 5zM3 30h8l-4-5zM3 36h8l-4-5zM3 48h8l-4 5zM3 54h8l-4 5z" fill="#fff" stroke="none" />
          </Icon>
          <Pad $h={9} />
        </Track>
        <Edge />
      </Workspace>

      <Status>
        <StatusText $l={90} $w={234}>幻灯片 53 / 94</StatusText>
        <Rule $h={6} />
        <StatusText $l={53} $w={120}>默认设计模板</StatusText>
        <StatusRight>
          <Tool $w={18} aria-label="备份"><Icon w={9}><circle cx="8.500" cy="8" r="6.200" /><path d="M8 4.500V8h3M0 8h4" /></Icon></Tool>
          <Rule $h={6} />
          <NotesTool $w={44}><Icon w={10}><path d="M1 3h13M3 8h6M1 13h14M10 9l3-3 2 3z" /></Icon>备注</NotesTool>
          <Tool $w={18} aria-label="普通视图"><Icon w={10}><path d="M1 2h4v12H1z" fill="#c05a48" stroke="none" /><path d="M7 3h8M7 6.500h8M7 10h8M7 13.500h8" stroke="#b0503f" strokeWidth="2" /></Icon></Tool>
          <Tool $w={18} aria-label="浏览视图"><Icon w={10}><path d="M1 2h6v5H1zM9 2h6v5H9zM1 9h6v5H1zM9 9h6v5H9z" fill="#85858a" stroke="#66666b" /></Icon></Tool>
          <Tool $w={18} aria-label="阅读视图"><Icon w={10}><path d="M1 2h6.500v11H1zM8.500 2H15v11H8.500zM3 5h3M3 8h3M10.500 5h3M10.500 8h3" stroke="#77777c" strokeWidth="1.200" /></Icon></Tool>
          <Tool $w={18} aria-label="放映"><Icon w={10}><path d="M2 2h12v12H2z" fill="#ee8339" stroke="none" /><path d="M6 5h4v5H6z" fill="#fff" stroke="none" /></Icon></Tool>
          <Tool $w={34}>100 %</Tool>
          <Tool $w={9} aria-label="缩小"><Icon w={8}><path d="M1 8h14" strokeWidth="2" /></Icon></Tool>
          <Zoom type="range" min={0} max={100} defaultValue={50} aria-label="缩放" />
          <Tool $w={10} aria-label="放大"><Icon w={8}><path d="M1 8h14M8 1v14" strokeWidth="2" /></Icon></Tool>
        </StatusRight>
      </Status>

      <Taskbar>
        <TaskItem $w={32} aria-label="开始"><Icon w={12}><path d="M1 3.200 7 2.300V7.500H1zM8 2.200 15 1v6.500H8zM1 8.500h6v5.200l-6-.9zM8 8.500h7V15l-7-1.200z" fill="#fff" stroke="none" /></Icon></TaskItem>
        <Search placeholder="搜索 Web 和 Windows" aria-label="搜索 Web 和 Windows" />
        <TaskItem $w={32} aria-label="任务视图"><Icon w={14}><path d="M4 3h8v10H4zM2.500 5H.8v6h1.700M13.500 5h1.700v6h-1.700" strokeWidth="1.100" /></Icon></TaskItem>
        <TaskItem $w={36} aria-label="Edge"><Icon w={14}><path d="M1 7.500C1.500 3 5 1 8.300 1 12.500 1 15 4 15 7.500V9.300H6C6 12 8.500 12.800 10.500 12.800c1.500 0 2.700-.4 3.700-1v2.700c-1.200.6-2.600 1-4.400 1-4 0-7-2.200-7-6C2.800 7 4.500 5.200 6.500 4.500 4 4.700 2 6 1 7.500zM6.100 6.500h5C11 4.800 10 4 8.600 4 7.200 4 6.300 5 6.100 6.500z" fill="#1a7fd0" stroke="none" /></Icon></TaskItem>
        <TaskItem $w={28} $line="#e9c65c" aria-label="文件资源管理器"><Icon w={14}><path d="M1 2h6l1.500 1.500H15V14H1z" fill="#f3d777" stroke="none" /><path d="M2 8h12v6h-3v-3H5v3H2z" fill="#3aa7d8" stroke="none" /></Icon></TaskItem>
        <TaskItem $w={37} aria-label="应用商店"><Icon w={14}><path d="M1 5h14v10H1z" fill="#fff" stroke="none" /><path d="M5 5q0-4 3-4t3 4" stroke="#fff" /><path d="M4 7.500l3.500-.4v2.500H4zM8 7l4-.5v3H8zM4 10.300h3.500v2.500L4 12.400zM8 10.300h4v3L8 12.800z" fill="#111" stroke="none" /></Icon></TaskItem>
        <TaskItem $w={32} aria-label="浏览器"><Icon w={14}><circle cx="8" cy="8" r="7.500" fill="#63bd3f" stroke="none" /><circle cx="8" cy="8" r="4.500" stroke="#e9f7e2" /><path d="M5 8.500q3 3 6 0M6 6v1M10 6v1" stroke="#e9f7e2" /></Icon></TaskItem>
        <TaskItem $w={32} $on $line="#f0a878" aria-label="WPS 演示"><Icon w={16}><path d="M2 0h12q2 0 2 2v12q0 2-2 2H2q-2 0-2-2V2q0-2 2-2z" fill="#ee6a28" stroke="none" /><path d="M4 5h7q1.500 0 1.500 1.700T11 8.500H7V12M4 7.500h5" stroke="#fff" /></Icon></TaskItem>
        <Tray>
          <TaskItem $w={18} aria-label="U 盘"><Icon w={10}><path d="M4 5h8v10H4z" fill="#57c33b" stroke="none" /><path d="M5.500 1h5v4h-5z" fill="#d9f0d2" stroke="none" /></Icon></TaskItem>
          <TaskItem $w={18} aria-label="显示隐藏的图标"><Icon w={9}><path d="m2 11 6-6 6 6" strokeWidth="1.600" /></Icon></TaskItem>
          <TaskItem $w={14} aria-label="摄像头"><Icon w={10}><path d="M1 5h8v7H1zM9 8l6-3v7z" fill="#bbb" stroke="none" /></Icon></TaskItem>
          <TaskItem $w={18} aria-label="网络"><Icon w={11}><path d="M1 3h13v8H4v3M1 6h3" /><path d="M8 8h7v7H8z" fill="#d53a5c" stroke="none" /><path d="m9.500 9.500 4 4M13.500 9.500l-4 4" stroke="#fff" strokeWidth="1" /></Icon></TaskItem>
          <TaskItem $w={16} aria-label="音量"><Icon w={11}><path d="M1 6h2.500L7 3v10L3.500 10H1zM9.500 6q1.500 2 0 4M11.500 4q3 4 0 8M13.500 2.500q4 5.500 0 11" strokeWidth="1.100" /></Icon></TaskItem>
          <TaskItem $w={16} aria-label="操作中心"><Icon w={11}><path d="M1 2h14v10H9l-2.500 3L4.500 12H1zM4 5h8M4 7.200h8M4 9.500h5" strokeWidth="1.200" /></Icon></TaskItem>
          <TaskItem $w={16} aria-label="输入法"><Lang>中</Lang></TaskItem>
          <TaskItem $w={22} aria-label="搜狗输入法"><SogouMark w={10} /></TaskItem>
          <Clock>15:38 周日<br />2016/11/13</Clock>
        </Tray>
      </Taskbar>

      <Ime>
        <SogouMark w={18} />
        <ImeKeys>
          <span>中</span>
          <Icon w={9}><path d="M11 1q3 11-10 11 12 6 14-5-1-4-4-6z" fill="currentColor" stroke="none" /></Icon>
          <Icon w={8}><circle cx="4" cy="5" r="2" /><path d="M12 8q2 3-1 6" strokeWidth="3" /></Icon>
          <Icon w={11}><path d="M1 3h14v10H1zM3 6h10M3 8h10M5 10.500h6" /></Icon>
          <Icon w={11}><circle cx="6" cy="4" r="2.800" fill="currentColor" stroke="none" /><path d="M1 13q0-5 5-5 3 0 4 2v3z" fill="currentColor" stroke="none" /><circle cx="10" cy="12" r="2" /><circle cx="14" cy="12" r="2" /></Icon>
          <Icon w={10}><path d="M5 2 1 4l1.500 4L4 7.500V14h8V7.500l1.500.5L15 4l-4-2q-3 2.500-6 0z" fill="currentColor" /></Icon>
          <Icon w={10}><path d="m2 14 7-7M9 7q-1-4 3-5l-1 3 1.500 1.500L15 5q0 4-4 4z" strokeWidth="2.400" /></Icon>
        </ImeKeys>
      </Ime>
      <Ball aria-label="加速球">43</Ball>
    </Shell>
  );
}
